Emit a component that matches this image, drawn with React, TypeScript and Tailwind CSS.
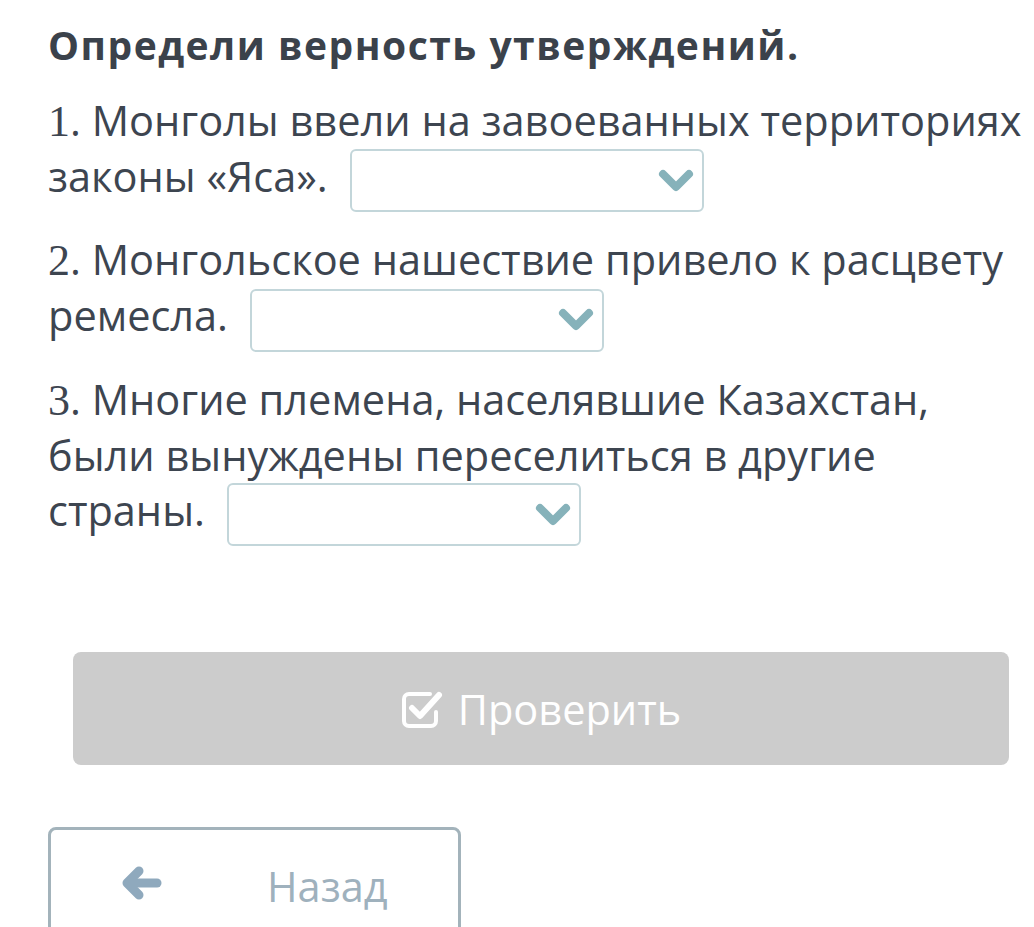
import React from 'react';

function Chevron() {
  return (
    <svg width="36" height="26" viewBox="0 0 36 26" fill="none">
      <path d="M5 6 L18 19 L31 6" stroke="#86b2ba" strokeWidth="8" strokeLinecap="round" strokeLinejoin="round" />
    </svg>
  );
}

function Dropdown() {
  return (
    <span className="ml-[22px] inline-flex h-[63px] w-[354px] items-center justify-end rounded-md border-2 border-[#c3d6da] bg-white pr-[8px] align-middle">
      <Chevron />
    </span>
  );
}

function CheckSquare() {
  return (
    <svg width="42" height="40" viewBox="0 0 42 40" fill="none" className="shrink-0">
      <path
        d="M29 5 H8 a5 5 0 0 0 -5 5 v22 a5 5 0 0 0 5 5 h22 a5 5 0 0 0 5 -5 v-9"
        stroke="white"
        strokeWidth="4"
        strokeLinecap="round"
      />
      <path d="M11 19 L19 27 L38 6" stroke="white" strokeWidth="6" strokeLinecap="round" strokeLinejoin="round" />
    </svg>
  );
}

function ArrowLeft() {
  return (
    <svg width="42" height="34" viewBox="0 0 42 34" fill="none" className="shrink-0">
      <path d="M18 5 L6 17 L18 29" stroke="#8fa9bd" strokeWidth="9" strokeLinecap="round" strokeLinejoin="round" />
      <path d="M8 17 H36" stroke="#8fa9bd" strokeWidth="9" strokeLinecap="round" />
    </svg>
  );
}

const items = [
  { n: '1', text: 'Монголы ввели на завоеванных территориях законы «Яса».' },
  { n: '2', text: 'Монгольское нашествие привело к расцвету ремесла.' },
  { n: '3', text: 'Многие племена, населявшие Казахстан, были вынуждены переселиться в другие страны.' },
];

export default function App() {
  return (
    <div
      className="min-h-screen overflow-hidden bg-white pl-[48px] pt-[17px] text-[#3d4550]"
      style={{ fontFamily: '"Open Sans", "Noto Sans", sans-serif' }}
    >
      <h1 className="text-[39px] font-bold leading-[55px] tracking-[1.5px] text-[#3b424b]">
        Определи верность утверждений.
      </h1>

      <div className="mt-[21px] flex flex-col gap-[20px]">
        {items.map((item) => (
          <p key={item.n} className="pr-[10px] text-[41.5px] leading-[55px]">
            <span className="text-[44px]" style={{ fontFamily: '"Liberation Serif", serif' }}>
              {item.n}
            </span>
            . {item.text}
            <Dropdown />
          </p>
        ))}
      </div>

      <div className="mx-[25px] mt-[106px] flex h-[113px] items-center justify-center gap-[15px] rounded-lg bg-[#cccccc] text-[41.5px] text-white">
        <CheckSquare />
        <span>Проверить</span>
      </div>

      <div className="mt-[62px] flex h-[130px] w-[413px] items-start rounded-lg border-[3px] border-[#a3b3bb] pt-[25px] text-[41.5px] text-[#9fb1bd]">
        <span className="ml-[70px] mt-[11px]">
          <ArrowLeft />
        </span>
        <span className="ml-[104px]">Назад</span>
      </div>
    </div>
  );
}
